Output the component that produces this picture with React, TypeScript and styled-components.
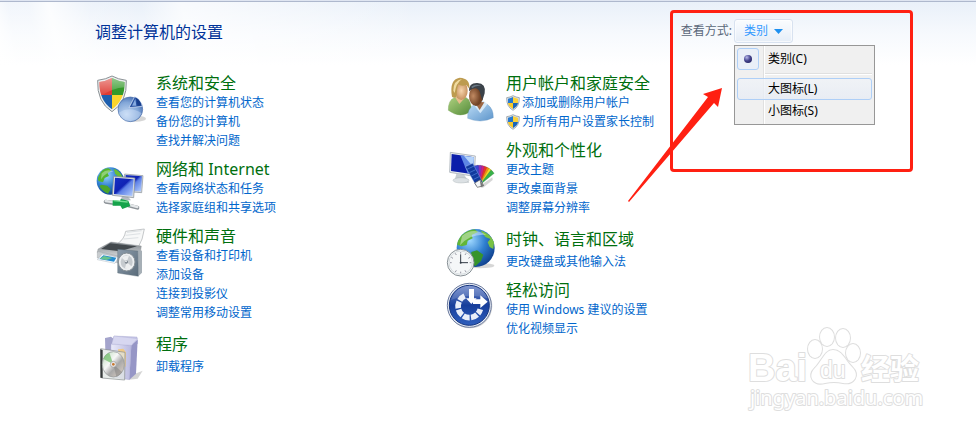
import React, { useState } from "react";
import styled, { createGlobalStyle } from "styled-components";

const GlobalStyle = createGlobalStyle`
  * { box-sizing: border-box; }
  html { height: 100%; background: #fff; }
  body {
    margin: 0;
    font-family: "Noto Sans", "Noto Sans CJK SC", sans-serif;
    font-size: 12px;
    overflow-x: hidden;
  }
`;

const Page = styled.div`
  position: relative;
  min-height: 100vh;
  overflow: hidden;
  border-top: 1px solid #dfe5f1;
  background:
    linear-gradient(78deg, #ffffff 0, #ffffff60 20px, #ffffff60 40px, #ffffffd0 60px, #ffffff30 100px, #ffffff00 150px, #ffffffb0 190px, #ffffff00 420px) 0 0 / 100% 64px no-repeat,
    linear-gradient(#e9f0f9, #f6f9fd 32px, #ffffff 64px);
`;

const Header = styled.header`
  display: flex;
  justify-content: space-between;
  align-items: center;
  height: 61px;
  padding: 0 183px 0 95px;
  border-top: 1px solid #aeb8cd;
`;

const Title = styled.h1`
  margin: 0;
  color: #003399;
  font-size: 16px;
  font-weight: 400;
  line-height: 24px;
`;

const ViewBy = styled.div`
  position: relative;
  display: flex;
  align-items: center;
  gap: 2px;
  margin-bottom: 2px;
  color: #5a6779;
  line-height: 24px;
`;

const DropDown = styled.div`
  position: relative;
`;

const DropButton = styled.button`
  display: flex;
  align-items: center;
  gap: 6px;
  height: 24px;
  padding: 0 9px;
  border: 1px solid #d8e2f0;
  border-radius: 3px;
  background: linear-gradient(#fafcfe, #f1f5fb 50%, #e5edf7);
  box-shadow: inset 0 0 0 1px #ffffffa0;
  color: #3399ff;
  font: inherit;
`;

const Menu = styled.div`
  position: absolute;
  z-index: 2;
  top: 26px;
  left: 0;
  width: 141px;
  padding: 2px;
  border: 1px solid #979797;
  background: linear-gradient(90deg, #f0f0f0 28px, #e0e0e0 28px, #e0e0e0 29px, #fff 29px, #fff 30px, #f0f0f0 30px);
`;

const MenuItem = styled.button<{ $active?: boolean }>`
  display: grid;
  grid-template-columns: 20px 1fr;
  align-items: center;
  gap: 10px;
  width: 100%;
  height: 22px;
  padding: 0;
  border: 1px solid ${(p) => (p.$active ? "#aecff7" : "transparent")};
  border-radius: 3px;
  background: ${(p) => (p.$active ? "linear-gradient(#f0f3f8c0, #e6ecf5c0)" : "none")};
  color: #000;
  font: inherit;
  line-height: 20px;
  text-align: left;
`;

const RadioMark = styled.span`
  display: grid;
  place-items: center;
  width: 22px;
  height: 22px;
  margin: -1px;
  border: 1px solid #aecff7;
  border-radius: 3px;
  background: #e9eff8;

  &::after {
    content: "";
    width: 8px;
    height: 8px;
    border-radius: 50%;
    background: radial-gradient(circle at 35% 30%, #b8b8ea, #45458f 45%, #15154e);
  }
`;

const Separator = styled.hr`
  height: 2px;
  margin: 3px 0 3px 28px;
  border: 0;
  border-top: 1px solid #e0e0e0;
  border-bottom: 1px solid #fff;
`;

const Frame = styled.div`
  position: absolute;
  z-index: 3;
  top: -9px;
  left: -11px;
  width: 243px;
  height: 162px;
  border: 3px solid #ff2012;
  border-radius: 4px;
  pointer-events: none;
`;

const Arrow = styled.svg`
  position: absolute;
  top: 64px;
  left: -48px;
  width: 100px;
  height: 130px;
`;

const Columns = styled.main`
  display: flex;
  flex-wrap: wrap;
  padding: 12px 0 40px 95px;
`;

const Column = styled.div`
  display: flex;
  flex: 0 1 350px;
  flex-direction: column;
  gap: 10px;
`;

const Section = styled.section`
  display: grid;
  grid-template-columns: 52px 1fr;
  column-gap: 9px;
  align-items: start;
`;

const Icon = styled.svg`
  width: 52px;
  height: 52px;
  margin-bottom: -8px;
`;

const Heading = styled.h2<{ $roomy: boolean }>`
  margin: 0;
  font-size: 16px;
  font-weight: 400;
  line-height: ${(p) => (p.$roomy ? "25px" : "19px")};
  white-space: nowrap;
`;

const HeadingLink = styled.a`
  color: #006f0e;
  text-decoration: none;
`;

const Tasks = styled.ul`
  margin: 0;
  padding: 0;
  list-style: none;
`;

const Task = styled.li`
  height: 19px;
  line-height: 19px;
  white-space: nowrap;
`;

const TaskLink = styled.a`
  display: inline-flex;
  align-items: center;
  gap: 2px;
  color: #0066cc;
  text-decoration: none;
`;

const MiniShield = styled.svg`
  width: 14px;
  height: 16px;
`;

const Watermark = styled.svg`
  position: absolute;
  right: 46px;
  bottom: 16px;
  width: 184px;
  height: 90px;
  pointer-events: none;
`;

const SHIELD = "M66 18 Q84 28 109 31 Q112 96 66 125 Q20 96 23 31 Q48 28 66 18Z";
const SHIELD_IN = "M66 24 Q83 33 104 36 Q105 91 66 118 Q27 91 28 36 Q49 33 66 24Z";

const SecurityIcon = () => (
  <Icon viewBox="15 12 156 156" aria-hidden="true">
    <defs>
      <linearGradient id="shine" x1="0" y1="0" x2="0" y2="1">
        <stop offset="0" stopColor="#fff" stopOpacity=".5" />
        <stop offset="1" stopColor="#fff" stopOpacity="0" />
      </linearGradient>
      <radialGradient id="pie" cx=".35" cy=".7" r=".8">
        <stop offset="0" stopColor="#c3d8f2" />
        <stop offset=".6" stopColor="#83a7d8" />
        <stop offset="1" stopColor="#3c65ac" />
      </radialGradient>
      <clipPath id="shieldClip"><path d={SHIELD_IN} /></clipPath>
    </defs>
    <path d={SHIELD} fill="#eceeef" stroke="#8b9296" strokeWidth="3" />
    <g clipPath="url(#shieldClip)">
      <path d="M20 18h46v58H20z" fill="#dd3b32" />
      <path d="M66 18h46v58H66z" fill="#34992a" />
      <path d="M20 75h46v50H20z" fill="#1d5fae" />
      <path d="M66 75h46v50H66z" fill="#fbd52c" />
      <path d="M20 20h92v32Q70 50 28 82z" fill="url(#shine)" />
    </g>
    <ellipse cx="138" cy="146" rx="30" ry="9" fill="#777" opacity=".3" />
    <circle cx="121" cy="118" r="37" fill="url(#pie)" stroke="#486da7" strokeWidth="2" />
    <path d="M86 128Q120 107 155 130Q142 153 121 153Q96 153 86 128Z" fill="#dceaff" opacity=".35" />
    <path d="M117 113 L134 80 Q151 86 157 109 Z" fill="#2650a0" stroke="#e0eafa" strokeWidth="2" />
    <path d="M126 107 L136 86 L139 107 Z" fill="#86aae0" />
    <path d="M138 84 Q151 91 154 106 L143 107 Z" fill="#173d8b" />
  </Icon>
);

const NetworkIcon = () => (
  <Icon viewBox="30 30 156 156" aria-hidden="true">
    <defs>
      <radialGradient id="globe" cx=".35" cy=".3" r=".8">
        <stop offset="0" stopColor="#9fd8ff" />
        <stop offset=".5" stopColor="#2f7fd0" />
        <stop offset="1" stopColor="#0a3784" />
      </radialGradient>
      <linearGradient id="screen" x1="0" y1="0" x2="1" y2="1">
        <stop offset="0" stopColor="#1731c4" />
        <stop offset=".45" stopColor="#1022b4" />
        <stop offset=".55" stopColor="#5c7fe6" />
        <stop offset="1" stopColor="#b8d2ff" />
      </linearGradient>
    </defs>
    <circle cx="76" cy="93" r="41" fill="url(#globe)" />
    <path d="M43 75Q52 54 70 55L80 61 68 70 72 78 59 84 54 97 42 94Q35 88 43 75Z" fill="#54b52d" />
    <path d="M86 56Q106 62 113 82L97 79 90 70Z" fill="#69be35" />
    <path d="M49 104L67 107 77 118 69 131Q51 123 43 108Z" fill="#4ba52b" />
    <path d="M50 70Q66 54 86 65Q62 65 48 88Z" fill="#fff" opacity=".35" />
    <path d="M119 72L174 77 170 128 116 124Z" fill="#d2d8de" stroke="#8a9198" strokeWidth="2" />
    <path d="M122 75L171 79 168 124 120 121Z" fill="url(#screen)" />
    <path d="M112 139L130 141 138 151 105 151Z" fill="#b5bcc2" />
    <path d="M86 79L150 84 146 143 82 136Z" fill="#d9dfe4" stroke="#7f878f" strokeWidth="2" />
    <path d="M90 83L146 88 142 138 87 132Z" fill="url(#screen)" />
    <path d="M62 155L92 160 M130 166L157 173" stroke="#8d9398" strokeWidth="12" strokeLinecap="round" />
    <path d="M62 153L92 158 M130 164L157 171" stroke="#e4e7e9" strokeWidth="7" strokeLinecap="round" />
    <path d="M83 151L105 153 108 147 130 152 136 168 112 177 106 167 83 167Z" fill="#16a34b" />
    <path d="M86 152L128 156" stroke="#73dc91" strokeWidth="4" />
  </Icon>
);

const HardwareIcon = () => (
  <Icon viewBox="30 21 156 156" aria-hidden="true">
    <defs>
      <linearGradient id="printer" x1="0" y1="0" x2="0" y2="1">
        <stop offset="0" stopColor="#7c8388" />
        <stop offset="1" stopColor="#d9dcde" />
      </linearGradient>
      <linearGradient id="speaker" x1="0" y1="0" x2="1" y2="1">
        <stop offset="0" stopColor="#8c9cab" />
        <stop offset="1" stopColor="#5a6b7a" />
      </linearGradient>
    </defs>
    <path d="M99 70Q118 57 122 34L178 27Q174 59 159 83Z" fill="#f7f8f8" stroke="#a9adb0" strokeWidth="2" />
    <path d="M126 37L170 32M122 46L166 41M116 57L160 53" stroke="#dde1e4" strokeWidth="3" />
    <path d="M39 87L78 66 169 78 167 92 104 112 37 98Z" fill="url(#printer)" stroke="#86898b" />
    <path d="M75 70L156 79 105 94 48 87Z" fill="#43494d" />
    <path d="M37 94L104 109 165 91V112L104 130 37 114Z" fill="#c9cdd0" stroke="#898f94" />
    <path d="M52 102L101 112 90 130 37 119Z" fill="#f8fbff" stroke="#8997a3" />
    <path d="M55 106L94 113 87 125 43 117Z" fill="#258bd0" />
    <path d="M57 108L82 114 64 120 44 116Z" fill="#68c38e" />
    <path d="M157 88L171 92V158L160 169Z" fill="#a6afb6" />
    <path d="M98 88L158 93 160 169 98 159Z" fill="url(#speaker)" stroke="#50606e" />
    <ellipse cx="125" cy="126" rx="25" ry="27" fill="#eceff1" stroke="#879096" strokeWidth="3" />
    <ellipse cx="125" cy="126" rx="18" ry="20" fill="#c6cbcf" />
    <path d="M125 126L110 113Q121 105 132 107ZM125 126L141 140Q131 150 120 145Z" fill="#f6f8f8" opacity=".8" />
    <circle cx="124" cy="126" r="5" fill="#7a848d" />
    <circle cx="123" cy="124" r="3" fill="#e8ebed" />
  </Icon>
);

const ProgramsIcon = () => (
  <Icon viewBox="30 336 156 156" aria-hidden="true">
    <defs>
      <linearGradient id="box" x1="0" y1="0" x2="1" y2="0">
        <stop offset="0" stopColor="#ececfa" />
        <stop offset="1" stopColor="#b9b9df" />
      </linearGradient>
      <linearGradient id="disc" x1="0" y1="0" x2="1" y2="1">
        <stop offset="0" stopColor="#b8d9b6" />
        <stop offset=".4" stopColor="#f7f7f7" />
        <stop offset=".6" stopColor="#a8a8a8" />
        <stop offset="1" stopColor="#e7d7c9" />
      </linearGradient>
    </defs>
    <path d="M139 466L173 452 158 476 132 479Z" fill="#aaa" opacity=".5" />
    <path d="M60 354L78 350 90 360 78 391H61Z" fill="#a4a4cc" />
    <path d="M87 348L156 351 158 371 80 372Z" fill="#c8c8e9" stroke="#9999c6" />
    <path d="M78 372L139 376 133 479 76 470Z" fill="url(#box)" stroke="#9d9dca" />
    <path d="M139 376L158 359 153 461 133 479Z" fill="#9696c6" />
    <path d="M87 348L80 372 139 376 158 356Z" fill="#d7d7f0" stroke="#aaa9d1" />
    <path d="M99 388L115 386 123 397 122 440 105 439Z" fill="#efc987" />
    <path d="M47 386L120 397 119 480 50 474Z" fill="#dfe5e3" fillOpacity=".7" stroke="#858b8c" strokeWidth="2" />
    <path d="M46 388L53 390V474L46 473Z" fill="#353939" />
    <ellipse cx="85" cy="433" rx="33" ry="38" fill="url(#disc)" stroke="#929797" strokeWidth="2" />
    <path d="M85 433L55 417Q60 402 73 398Z" fill="#6ebc66" opacity=".7" />
    <path d="M85 433L111 456Q104 467 94 470Z" fill="#777" opacity=".45" />
    <circle cx="85" cy="433" r="9" fill="#e5e5e5" stroke="#999" strokeWidth="2" />
    <circle cx="85" cy="433" r="4" fill="#c87930" />
  </Icon>
);

const UsersIcon = () => (
  <Icon viewBox="15 12 156 156" aria-hidden="true">
    <defs>
      <linearGradient id="green" x1="0" y1="0" x2="1" y2="1">
        <stop offset="0" stopColor="#add07e" />
        <stop offset="1" stopColor="#538a39" />
      </linearGradient>
      <linearGradient id="blue" x1="0" y1="0" x2="1" y2="1">
        <stop offset="0" stopColor="#b9daf5" />
        <stop offset="1" stopColor="#5c94ca" />
      </linearGradient>
      <radialGradient id="tan"><stop stopColor="#f7d5ad" /><stop offset="1" stopColor="#c7925f" /></radialGradient>
      <radialGradient id="brown" cx=".3"><stop stopColor="#c18a62" /><stop offset="1" stopColor="#714326" /></radialGradient>
    </defs>
    <path d="M25 121Q24 91 43 83L79 83Q94 91 94 123Q61 148 25 121Z" fill="url(#green)" stroke="#6d9c4c" />
    <path d="M45 82L58 102 76 82Z" fill="#e8bd8c" />
    <ellipse cx="64" cy="62" rx="19" ry="28" fill="url(#tan)" />
    <path d="M36 80Q27 28 59 23Q91 25 88 56L79 45Q63 50 55 43Q50 56 50 81Q42 86 36 80Z" fill="#bd9b4f" />
    <path d="M40 62Q40 31 66 27Q48 39 44 69Z" fill="#f0dba0" />
    <path d="M83 145Q81 117 102 104L142 103Q161 117 160 143Q123 162 83 145Z" fill="url(#blue)" stroke="#6293bf" />
    <path d="M101 104L121 130 142 103 132 94H107Z" fill="#d6e9f8" />
    <path d="M103 95L119 120 133 97Z" fill="#9d6744" />
    <ellipse cx="108" cy="78" rx="21" ry="30" fill="url(#brown)" />
    <path d="M87 64Q86 38 112 39Q139 40 134 70L127 92 121 72Q119 58 108 55Q96 54 87 64Z" fill="#3b4249" />
    <path d="M94 50Q107 40 124 48Q108 45 96 55Z" fill="#697783" />
  </Icon>
);

const fan = [
  { color: "#8ccf3a", angle: 40 },
  { color: "#38b04a", angle: 47 },
  { color: "#f3dc24", angle: 33 },
  { color: "#f58c13", angle: 26 },
  { color: "#e93627", angle: 19 },
  { color: "#cc2287", angle: 11 },
  { color: "#8d31bd", angle: 3 },
  { color: "#3949d2", angle: -6 },
];

const AppearanceIcon = () => (
  <Icon viewBox="15 213 156 156" aria-hidden="true">
    <path d="M49 312L73 315 88 338 55 337 44 330Z" fill="#c6cdd1" />
    <ellipse cx="63" cy="331" rx="24" ry="8" fill="#dce1e4" stroke="#9ca3a8" />
    <path d="M31 247L106 258 103 319 29 307Z" fill="#e7ebef" stroke="#969fa7" strokeWidth="2" />
    <path d="M35 252L102 262 99 313 33 303Z" fill="#0b1eaa" />
    <path d="M61 256L102 262 99 313 83 310Z" fill="#5d86e5" />
    <path d="M72 258L102 262 100 291Z" fill="#b5d4fb" />
    <path d="M115 351L157 322 158 330 129 353Z" fill="#999" opacity=".4" />
    {fan.map(({ color, angle }) => (
      <path key={color} d="M111 344L107 286 122 286 118 344Z" fill={color} stroke="#333" strokeOpacity=".35" transform={`rotate(${angle} 115 345)`} />
    ))}
    <path d="M76 290L98 280 128 336 109 348Z" fill="#123a9e" stroke="#c5d8f6" />
    <path d="M81 298L102 288M88 308L107 299M94 318L112 309M101 328L117 320" stroke="#5487df" strokeWidth="2" />
    <path d="M104 339L121 329 131 347 112 352Z" fill="#f4f6f7" stroke="#555" strokeWidth="2" />
    <path d="M119 329L131 347 123 352Z" fill="#777" />
  </Icon>
);

const ClockIcon = () => (
  <Icon viewBox="15 21 156 156" aria-hidden="true">
    <ellipse cx="120" cy="137" rx="43" ry="8" fill="#777" opacity=".3" />
    <circle cx="107" cy="84" r="57" fill="url(#globe)" />
    <path d="M59 54Q75 31 103 28L114 36 95 45 98 55 83 62 80 75 65 79 51 74Q53 62 59 54Z" fill="#62b637" />
    <path d="M121 31Q151 40 162 67L160 87 149 81 143 67 151 57 136 51Z" fill="#79c244" />
    <path d="M94 96L111 91 130 104 123 123 106 139 94 128Z" fill="#37942b" />
    <path d="M66 48Q98 19 139 45Q91 41 60 76Z" fill="#fff" opacity=".4" />
    <circle cx="62" cy="128" r="40" fill="#f5f7f8" stroke="#868f94" strokeWidth="3" />
    <circle cx="62" cy="128" r="35" fill="none" stroke="#d6dcdf" strokeWidth="3" />
    <path d="M62 96V101M62 155V160M30 128H35M89 128H94M78 100L75 105M90 112L85 115M34 112L39 115M46 100L49 105M46 156L49 151M78 156L75 151" stroke="#667" strokeWidth="2" />
    <path d="M62 103V128H84" fill="none" stroke="#343c46" strokeWidth="3" />
    <circle cx="62" cy="128" r="3" fill="#343c46" />
  </Icon>
);

const EaseIcon = () => (
  <Icon viewBox="15 183 156 156" aria-hidden="true">
    <defs>
      <linearGradient id="ease" x1="0" y1="0" x2="0" y2="1">
        <stop offset="0" stopColor="#6c86c9" />
        <stop offset=".5" stopColor="#173e9b" />
        <stop offset="1" stopColor="#2f5fbd" />
      </linearGradient>
    </defs>
    <circle cx="90" cy="258" r="67" fill="#999" opacity=".4" />
    <circle cx="88" cy="256" r="66" fill="#e9edf5" stroke="#68789c" strokeWidth="3" />
    <circle cx="88" cy="256" r="60" fill="url(#ease)" stroke="#15357f" strokeWidth="3" />
    <path d="M74 228A34 34 0 1 0 121 268" fill="none" stroke="#e9eef9" strokeWidth="17" strokeDasharray="20 4" />
    <path d="M87 207H102V235H110L94 252 78 235H87Z" fill="#fff" />
    <path d="M99 238H121V226L143 245 121 264V252H99Z" fill="#fff" />
    <path d="M33 240Q49 198 88 197Q127 198 143 235Q87 217 33 240Z" fill="#fff" opacity=".15" />
  </Icon>
);

const UacShield = () => (
  <MiniShield viewBox="0 0 42 48" aria-hidden="true">
    <path d="M21 2Q30 7 40 8Q41 35 21 46Q1 35 2 8Q12 7 21 2Z" fill="#dfe5e9" stroke="#7e8b93" strokeWidth="2" />
    <path d="M21 6V24H6V11Q14 10 21 6Z" fill="#2779cf" />
    <path d="M21 6Q28 10 36 11V24H21Z" fill="#fbd23b" />
    <path d="M6 24H21V42Q7 34 6 24Z" fill="#f9c927" />
    <path d="M21 24H36Q35 34 21 42Z" fill="#1b66ba" />
  </MiniShield>
);

type Category = { name: string; icon: React.ReactNode; tasks: string[]; shielded?: boolean };

const left: Category[] = [
  { name: "系统和安全", icon: <SecurityIcon />, tasks: ["查看您的计算机状态", "备份您的计算机", "查找并解决问题"] },
  { name: "网络和 Internet", icon: <NetworkIcon />, tasks: ["查看网络状态和任务", "选择家庭组和共享选项"] },
  { name: "硬件和声音", icon: <HardwareIcon />, tasks: ["查看设备和打印机", "添加设备", "连接到投影仪", "调整常用移动设置"] },
  { name: "程序", icon: <ProgramsIcon />, tasks: ["卸载程序"] },
];

const right: Category[] = [
  { name: "用户帐户和家庭安全", icon: <UsersIcon />, tasks: ["添加或删除用户帐户", "为所有用户设置家长控制"], shielded: true },
  { name: "外观和个性化", icon: <AppearanceIcon />, tasks: ["更改主题", "更改桌面背景", "调整屏幕分辨率"] },
  { name: "时钟、语言和区域", icon: <ClockIcon />, tasks: ["更改键盘或其他输入法"] },
  { name: "轻松访问", icon: <EaseIcon />, tasks: ["使用 Windows 建议的设置", "优化视频显示"] },
];

const CategoryList = ({ items }: { items: Category[] }) => (
  <Column>
    {items.map((item) => (
      <Section key={item.name}>
        {item.icon}
        <div>
          <Heading $roomy={item.tasks.length === 1}>
            <HeadingLink href="#">{item.name}</HeadingLink>
          </Heading>
          <Tasks>
            {item.tasks.map((task) => (
              <Task key={task}>
                <TaskLink href="#">
                  {item.shielded && <UacShield />}
                  {task}
                </TaskLink>
              </Task>
            ))}
          </Tasks>
        </div>
      </Section>
    ))}
  </Column>
);

const BaiduMark = () => (
  <Watermark viewBox="0 0 184 90" aria-label="Baidu 经验">
    <g fill="#fff" stroke="#dedede" strokeWidth="2" strokeLinejoin="round" paintOrder="stroke">
      <ellipse cx="69" cy="23" rx="7" ry="9" />
      <ellipse cx="81" cy="11" rx="7" ry="9" />
      <ellipse cx="97" cy="12" rx="7" ry="9" />
      <ellipse cx="107" cy="27" rx="7" ry="9" />
      <path d="M87 24C96 24 99 34 106 41C115 50 107 59 97 57Q88 55 79 57C67 60 61 50 69 42C76 35 79 24 87 24Z" />
      <text x="2" y="55" fontFamily="Liberation Sans, sans-serif" fontWeight="700" fontSize="38">Bai</text>
      <text x="74" y="52" fontFamily="Liberation Sans, sans-serif" fontSize="23">du</text>
      <text x="115" y="54" fontFamily="Noto Sans CJK SC, sans-serif" fontWeight="700" fontSize="29">经验</text>
      <text x="4" y="79" fontFamily="Noto Sans, sans-serif" fontSize="20">jingyan.baidu.com</text>
    </g>
  </Watermark>
);

export default function App() {
  const [open, setOpen] = useState(true);
  return (
    <Page>
      <GlobalStyle />
      <Header>
        <Title>调整计算机的设置</Title>
        <ViewBy>
          <span id="view-label">查看方式:</span>
          <DropDown>
            <DropButton aria-haspopup="menu" aria-expanded={open} onClick={() => setOpen(!open)}>
              类别
              <svg width="9" height="5" viewBox="0 0 9 5" aria-hidden="true">
                <path d="M0 0H9L4.5 5Z" fill="#1e90f0" />
              </svg>
            </DropButton>
            {open && (
              <Menu role="menu" aria-labelledby="view-label">
                <MenuItem role="menuitemradio" aria-checked="true"><RadioMark />类别(C)</MenuItem>
                <Separator />
                <MenuItem role="menuitemradio" aria-checked="false" $active><span />大图标(L)</MenuItem>
                <MenuItem role="menuitemradio" aria-checked="false"><span />小图标(S)</MenuItem>
              </Menu>
            )}
          </DropDown>
          <Frame>
            <Arrow viewBox="0 0 100 130" aria-hidden="true">
              <path d="M3 124L83 20 78 17 97 11 93 30 89 26 4 125Z" fill="#ff2012" />
            </Arrow>
          </Frame>
        </ViewBy>
      </Header>
      <Columns>
        <CategoryList items={left} />
        <CategoryList items={right} />
      </Columns>
      <BaiduMark />
    </Page>
  );
}
